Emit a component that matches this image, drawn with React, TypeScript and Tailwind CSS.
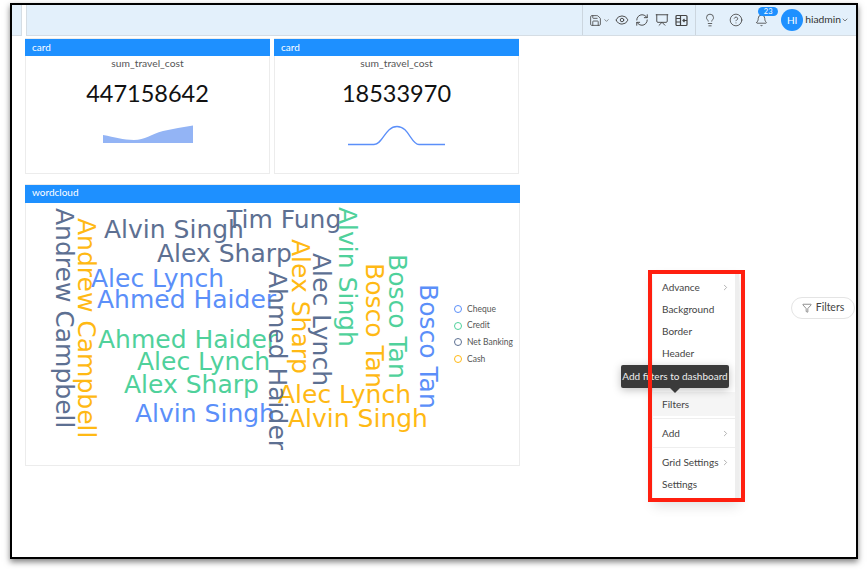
import React from "react";
import { Save, ChevronDown, ChevronRight, Eye, RefreshCw, Presentation, Lightbulb, CircleHelp, Bell, Filter } from "lucide-react";

const H = "absolute whitespace-nowrap leading-none text-[25px]";
const V = "absolute whitespace-nowrap leading-none text-[25px] [writing-mode:vertical-rl]";
const words: [string, string][] = [
  ["Andrew Campbell", V + " left-[26px] top-[5px] text-[#5d7092]"],
  ["Andrew Campbell", V + " left-[48px] top-[15px] text-[#ffb914]"],
  ["Alvin Singh", H + " left-[78px] top-[14px] text-[#5d7092]"],
  ["Tim Fung", H + " left-[201px] top-[4px] text-[#5d7092]"],
  ["Alex Sharp", H + " left-[131px] top-[38px] text-[#5d7092]"],
  ["Alec Lynch", H + " left-[65px] top-[63px] text-[#5b8ff9]"],
  ["Ahmed Haider", H + " left-[71px] top-[84px] text-[#5b8ff9]"],
  ["Ahmed Haider", H + " left-[72px] top-[124px] text-[#4fd19b]"],
  ["Alec Lynch", H + " left-[111px] top-[146px] text-[#4fd19b]"],
  ["Alex Sharp", H + " left-[98px] top-[169px] text-[#4fd19b]"],
  ["Alvin Singh", H + " left-[109px] top-[198px] text-[#5b8ff9]"],
  ["Alec Lynch", H + " left-[252px] top-[179px] text-[#ffb914]"],
  ["Alvin Singh", H + " left-[262px] top-[203px] text-[#ffb914]"],
  ["Alvin Singh", V + " left-[309px] top-[4px] text-[#4fd19b]"],
  ["Alex Sharp", V + " left-[262px] top-[36px] text-[#ffb914]"],
  ["Alec Lynch", V + " left-[283px] top-[50px] text-[#5d7092]"],
  ["Ahmed Haider", V + " left-[239px] top-[68px] text-[#5d7092]"],
  ["Bosco Tan", V + " left-[336px] top-[60px] text-[#ffb914]"],
  ["Bosco Tan", V + " left-[359px] top-[51px] text-[#4fd19b]"],
  ["Bosco Tan", V + " left-[390px] top-[81px] text-[#5b8ff9]"],
];

const legend: [string, string][] = [
  ["Cheque", "border-[#5b8ff9]"],
  ["Credit", "border-[#4fd19b]"],
  ["Net Banking", "border-[#5d7092]"],
  ["Cash", "border-[#ffb914]"],
];

function Card({ value, children }: { value: string; children: React.ReactNode }) {
  return (
    <div className="w-[245px] h-[136px] border border-[#ececec] bg-white flex flex-col">
      <div className="h-[17px] -mx-px bg-[#1e90ff] text-white text-[10px] leading-[16px] pl-[7px]">card</div>
      <div className="text-center text-[10.3px] text-[#555] leading-[12px] mt-[1px]">sum_travel_cost</div>
      <div className="text-center text-[23.5px] text-[#111] leading-[30px] mt-[9px]">{value}</div>
      <div className="relative mt-[3px] flex-1">{children}</div>
    </div>
  );
}

function MenuRow({ label, arrow, className = "" }: { label: string; arrow?: boolean; className?: string }) {
  return (
    <div className={"flex items-center justify-between pl-[9px] pr-[5px] text-[#444] text-[10px] " + className}>
      <span>{label}</span>
      {arrow && <ChevronRight size={9} className="text-[#999]" />}
    </div>
  );
}

export default function App() {
  return (
    <div className="w-[867px] h-[570px] bg-white pl-[10px] pt-[3px] font-['Lato',sans-serif] overflow-hidden">
      <div className="relative w-[848px] h-[556px] border-2 border-black bg-white shadow-[0_3px_6px_rgba(0,0,0,0.5)] overflow-hidden">
        {/* top bar */}
        <div className="flex h-[31px] gap-[4px]">
          <div className="w-[10px] bg-[#e3f0fb] border-b border-r border-[#d5dde4]" />
          <div className="flex-1 bg-[#e3f0fb] border-b border-l border-[#d5dde4] flex items-center justify-end text-[#444]">
            <div className="flex items-center h-full border-l border-[#ccd6df] pl-[6px] pr-[7px]">
              <Save size={13} strokeWidth={1.5} />
              <ChevronDown size={7} className="ml-[1px] mr-[5px]" />
              <Eye size={14} strokeWidth={1.6} className="mr-[6px]" />
              <RefreshCw size={14} strokeWidth={1.6} className="mr-[6px]" />
              <Presentation size={14} strokeWidth={1.6} className="mr-[6px]" />
              <svg width="13" height="13" viewBox="0 0 13 13" fill="none" stroke="currentColor" strokeWidth="1.2">
                <rect x="1" y="1.5" width="11" height="10" rx="1" />
                <path d="M5.5 1.5v10M1 4.5h4.5M1 8h4.5M8 6.5h4" />
                <path d="M9.5 5L8 6.5 9.5 8" />
              </svg>
            </div>
            <div className="flex items-center h-full border-l border-[#ccd6df] pl-[7px]">
              <Lightbulb size={14} strokeWidth={1.4} className="mr-[12px]" />
              <CircleHelp size={14} strokeWidth={1.4} className="mr-[12px]" />
              <div className="relative mr-[13px]">
                <Bell size={13} strokeWidth={1.5} />
                <span className="absolute left-[3px] top-[-7px] w-[20px] h-[9px] rounded-full bg-[#1e90ff] text-white text-[7.5px] leading-[9px] text-center">23</span>
              </div>
              <div className="w-[22px] h-[22px] rounded-full bg-[#1e90ff] text-white text-[10px] flex items-center justify-center mr-[2px]">HI</div>
              <span className="text-[10.3px] text-[#333]">hiadmin</span>
              <ChevronDown size={8} className="mr-[7px]" />
            </div>
          </div>
        </div>

        {/* cards */}
        <div className="flex gap-[4px] pl-[13px] pt-[2px]">
          <Card value="447158642">
            <svg width="92" height="22" viewBox="0 0 92 22" className="absolute left-[77px] top-[14px]">
              <path d="M0 10 C12 12 20 15 31 15 C42 15 48 9 60 6 C70 4 80 2 90 0.5 V18 H0 Z" fill="#93b4f5" />
            </svg>
          </Card>
          <Card value="18533970">
            <svg width="100" height="22" viewBox="0 0 100 22" className="absolute left-[72px] top-[14px]">
              <path d="M1 19.5 H27 C36 19.5 38 1.5 50 1.5 C62 1.5 64 19.5 72 19.5 H98" fill="none" stroke="#5b8ff9" strokeWidth="1.3" />
            </svg>
          </Card>
        </div>

        {/* word cloud */}
        <div className="ml-[13px] mt-[10px] w-[495px] h-[282px] border border-[#ececec] flex flex-col">
          <div className="h-[18px] -mx-px bg-[#1e90ff] text-white text-[10px] leading-[15px] pl-[7px]">wordcloud</div>
          <div className="relative flex-1 font-['DejaVu_Sans',sans-serif]">
            {words.map(([t, c], i) => (
              <span key={i} className={c}>{t}</span>
            ))}
            <div className="absolute left-[428px] top-[100px] flex flex-col gap-[4.7px] font-['Lato',sans-serif]">
              {legend.map(([t, c]) => (
                <div key={t} className="flex items-center gap-[5px] h-[12px] text-[8.5px] text-[#555]">
                  <span className={"w-[8px] h-[8px] rounded-full border bg-white " + c} />
                  {t}
                </div>
              ))}
            </div>
          </div>
        </div>

        {/* filter pill */}
        <div className="absolute left-[779px] top-[292px] w-[64px] h-[22px] rounded-full border border-[#e4e4e4] bg-white flex items-center justify-center gap-[4px] text-[10.5px] text-[#444]">
          <Filter size={10} strokeWidth={1.4} />
          Filters
        </div>

        {/* context menu */}
        <div className="absolute left-[641px] top-[269px] w-[86px] h-[228px] bg-white border-r-[4px] border-[#eeeeee] shadow-[0_4px_12px_rgba(0,0,0,0.12)] flex flex-col">
          <MenuRow label="Advance" arrow className="h-[22px] mt-[2px]" />
          <MenuRow label="Background" className="h-[22px]" />
          <MenuRow label="Border" className="h-[22px]" />
          <MenuRow label="Header" className="h-[23px]" />
          <div className="h-[27px]" />
          <MenuRow label="Filters" className="h-[24px] bg-[#f5f5f5]" />
          <div className="border-t border-[#eeeeee] mt-[2px]" />
          <MenuRow label="Add" arrow className="h-[28px]" />
          <div className="border-t border-[#eeeeee]" />
          <MenuRow label="Grid Settings" arrow className="h-[28px]" />
          <MenuRow label="Settings" className="h-[16px]" />
        </div>

        {/* tooltip */}
        <div className="absolute left-[609px] top-[360px] w-[108px] h-[23px] rounded-[2px] bg-[#3a3a3a] text-[#eee] text-[10px] leading-[22px] text-center shadow-[0_2px_8px_rgba(0,0,0,0.25)] whitespace-nowrap">
          Add filters to dashboard
          <span className="absolute left-[49px] top-[23px] w-0 h-0 border-x-[5px] border-x-transparent border-t-[5px] border-t-[#3a3a3a]" />
        </div>

        {/* annotation */}
        <div className="absolute left-[636px] top-[265px] w-[97px] h-[232px] border-[4px] border-[#ff1f0f] pointer-events-none" />
      </div>
    </div>
  );
}
